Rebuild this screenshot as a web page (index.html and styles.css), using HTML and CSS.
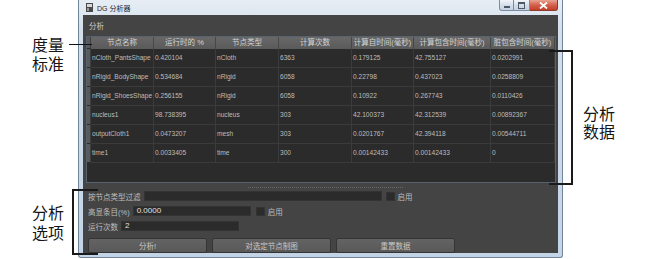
FILE: index.html
```html
<!DOCTYPE html>
<html lang="zh-CN">
<head>
    <meta charset="UTF-8">
    <title>DG 分析器</title>
    <link rel="stylesheet" href="styles.css">
</head>
<body>
<div class="page">

    <div class="side side-left">
        <div class="callout callout-metric">
            <div class="callout-line">度量</div>
            <div class="callout-line">标准</div>
        </div>
        <div class="callout callout-options">
            <div class="callout-line">分析</div>
            <div class="callout-line">选项</div>
        </div>
    </div>

    <div class="window">
        <div class="titlebar">
            <svg class="app-icon" width="7" height="9" viewBox="0 0 7 9">
                <rect x="0" y="0" width="7" height="9" fill="#4a4a4a"/>
                <rect x="1" y="1" width="5" height="3" fill="#d8d8d8"/>
                <rect x="1" y="5" width="2" height="3" fill="#9a9a9a"/>
            </svg>
            <span class="title">DG 分析器</span>
            <div class="caption-btns">
                <span class="cap-btn cap-min"><i></i></span>
                <span class="cap-btn cap-max"><i></i></span>
                <span class="cap-btn cap-close">
                    <svg width="9" height="7" viewBox="0 0 9 7">
                        <path d="M1 0.5 L8 6.5 M8 0.5 L1 6.5" stroke="#fff" stroke-width="1.8"/>
                    </svg>
                </span>
            </div>
        </div>

        <div class="client">
            <div class="menubar"><span>分析</span></div>

            <div class="grid">
                <div class="grid-row grid-head">
                    <div class="handle"></div>
                    <div class="th">节点名称</div>
                    <div class="th">运行时的 %</div>
                    <div class="th">节点类型</div>
                    <div class="th">计算次数</div>
                    <div class="th">计算自时间(毫秒)</div>
                    <div class="th">计算包含时间(毫秒)</div>
                    <div class="th">脏包含时间(毫秒)</div>
                </div>
                <div class="grid-row">
                    <div class="handle"></div>
                    <div class="td">nCloth_PantsShape</div>
                    <div class="td">0.420104</div>
                    <div class="td">nCloth</div>
                    <div class="td">6363</div>
                    <div class="td">0.179125</div>
                    <div class="td">42.755127</div>
                    <div class="td">0.0202991</div>
                </div>
                <div class="grid-row">
                    <div class="handle"></div>
                    <div class="td">nRigid_BodyShape</div>
                    <div class="td">0.534684</div>
                    <div class="td">nRigid</div>
                    <div class="td">6058</div>
                    <div class="td">0.22798</div>
                    <div class="td">0.437023</div>
                    <div class="td">0.0258809</div>
                </div>
                <div class="grid-row">
                    <div class="handle"></div>
                    <div class="td">nRigid_ShoesShape</div>
                    <div class="td">0.256155</div>
                    <div class="td">nRigid</div>
                    <div class="td">6058</div>
                    <div class="td">0.10922</div>
                    <div class="td">0.267743</div>
                    <div class="td">0.0110426</div>
                </div>
                <div class="grid-row">
                    <div class="handle"></div>
                    <div class="td">nucleus1</div>
                    <div class="td">98.738395</div>
                    <div class="td">nucleus</div>
                    <div class="td">303</div>
                    <div class="td">42.100373</div>
                    <div class="td">42.312539</div>
                    <div class="td">0.00892367</div>
                </div>
                <div class="grid-row">
                    <div class="handle"></div>
                    <div class="td">outputCloth1</div>
                    <div class="td">0.0473207</div>
                    <div class="td">mesh</div>
                    <div class="td">303</div>
                    <div class="td">0.0201767</div>
                    <div class="td">42.394118</div>
                    <div class="td">0.00544711</div>
                </div>
                <div class="grid-row">
                    <div class="handle"></div>
                    <div class="td">time1</div>
                    <div class="td">0.0033405</div>
                    <div class="td">time</div>
                    <div class="td">300</div>
                    <div class="td">0.00142433</div>
                    <div class="td">0.00142433</div>
                    <div class="td">0</div>
                </div>
            </div>

            <div class="splitter"><span class="grip"></span></div>

            <div class="options">
                <div class="opt-row">
                    <span class="opt-label">按节点类型过滤</span>
                    <span class="field field-wide"></span>
                    <span class="check"></span>
                    <span class="opt-label">启用</span>
                </div>
                <div class="opt-row">
                    <span class="opt-label">高显条目(%)</span>
                    <span class="field field-short">0.0000</span>
                    <span class="check check-2"></span>
                    <span class="opt-label">启用</span>
                </div>
                <div class="opt-row">
                    <span class="opt-label">运行次数</span>
                    <span class="field field-short">2</span>
                </div>
                <div class="buttons">
                    <button class="btn">分析!</button>
                    <button class="btn">对选定节点制图</button>
                    <button class="btn">重置数据</button>
                </div>
            </div>
        </div>
    </div>

    <div class="side side-right">
        <div class="callout callout-data">
            <div class="callout-line">分析</div>
            <div class="callout-line">数据</div>
        </div>
    </div>

    <span class="pointer pointer-metric"></span>
    <span class="bracket bracket-data"></span>
    <span class="bracket bracket-options"></span>
</div>
</body>
</html>
```

FILE: styles.css
```css
body {
    margin: 0;
    background: #fff;
    font-family: 'Liberation Sans', 'Noto Sans CJK SC', sans-serif;
}
.page {
    position: relative;
    display: flex;
    height: 259px;
    overflow: hidden;
}

/* callouts around the window */
.side {
    display: flex;
    flex-direction: column;
}
.side-left {
    width: 78px;
    padding-left: 32px;
    box-sizing: border-box;
}
.side-right {
    padding-left: 20px;
}
.callout {
    display: flex;
    flex-direction: column;
    gap: 2px;
    font-family: 'Noto Sans CJK SC', sans-serif;
    font-size: 16px;
    color: #161616;
    white-space: nowrap;
}
.callout-line {
    height: 17px;
    line-height: 17px;
}
.callout-metric {
    margin-top: 36px;
}
.callout-options {
    margin-top: 132px;
    gap: 3px;
}
.callout-data {
    margin-top: 105px;
    gap: 1px;
}
.pointer {
    position: absolute;
    left: 69px;
    top: 44px;
    width: 23px;
    height: 1px;
    background: #111;
}
.bracket {
    position: absolute;
    border: 2px solid #1a1a1a;
}
.bracket-data {
    left: 549px;
    top: 50px;
    width: 22px;
    height: 131px;
    border-left: none;
}
.bracket-options {
    left: 72px;
    top: 189px;
    width: 24px;
    height: 62px;
    border-right: none;
}

/* window frame */
.window {
    width: 485px;
    height: 258px;
    box-sizing: border-box;
    border: 1px solid #71849a;
    border-top: none;
    border-radius: 0 0 3px 3px;
    padding: 0 4px 4px 4px;
    background: linear-gradient(180deg, #e7edf4, #d4dfeb 30px, #c3d4e7);
    display: flex;
    flex-direction: column;
}
.titlebar {
    height: 15px;
    display: flex;
    align-items: center;
    padding-left: 3px;
}
.app-icon {
    margin-right: 4px;
}
.title {
    font-size: 7px;
    color: #1e1e1e;
}
.caption-btns {
    margin-left: auto;
    align-self: flex-start;
    display: flex;
    height: 11px;
}
.cap-btn {
    box-sizing: border-box;
    height: 11px;
    border: 1px solid #7b8ca2;
    border-top: none;
    display: flex;
    align-items: center;
    justify-content: center;
    background: linear-gradient(180deg, #f2f5f9, #d3dde9 55%, #c4d1e1);
}
.cap-min {
    width: 15px;
    border-radius: 0 0 0 3px;
}
.cap-min i {
    width: 6px;
    height: 2px;
    margin-top: 3px;
    background: #4c5866;
}
.cap-max {
    width: 16px;
    border-left: none;
}
.cap-max i {
    width: 5px;
    height: 4px;
    border: 1px solid #4c5866;
    border-top-width: 2px;
}
.cap-close {
    width: 28px;
    border-left: none;
    border-color: #8c3a2e;
    border-radius: 0 0 3px 0;
    background: linear-gradient(180deg, #e9a493, #d4604b 50%, #c2402c);
}

/* dark client area */
.client {
    flex: 1;
    background: #444;
    display: flex;
    flex-direction: column;
    font-size: 6.6px;
    color: #bdbdbd;
}
.menubar {
    height: 21px;
    padding-left: 6px;
    display: flex;
    align-items: center;
    font-size: 7.5px;
    color: #cfcfcf;
}
.grid {
    margin: 0 2px 0 3px;
    height: 147px;
    box-sizing: border-box;
    border: 1px solid #56636f;
    background: #2b2b2b;
}
.grid-row {
    display: grid;
    grid-template-columns: 4px 63px 62px 63px 73px 62px 77px 64px;
    height: 19px;
}
.grid-head {
    height: 12px;
}
.handle {
    background: #5a5a5a;
    border-bottom: 1px solid #2b2b2b;
    border-right: 1px solid #3e3e3e;
}
.th {
    background: linear-gradient(180deg, #686868, #5a5a5a);
    border-right: 1px solid #474747;
    color: #d4d4d4;
    font-size: 7.5px;
    line-height: 12px;
    text-align: center;
    white-space: nowrap;
    overflow: hidden;
}
.td {
    border-right: 1px solid #3b3b3b;
    border-bottom: 1px solid #3b3b3b;
    padding-left: 1px;
    line-height: 18px;
    white-space: nowrap;
    overflow: hidden;
}

.splitter {
    height: 8px;
    display: flex;
    align-items: center;
    justify-content: center;
}
.grip {
    width: 155px;
    height: 1px;
    margin-left: 10px;
    background: repeating-linear-gradient(90deg, #6a6a6a 0 1px, transparent 1px 2px);
}

.options {
    padding-left: 5px;
    display: flex;
    flex-direction: column;
    gap: 5px;
}
.opt-row {
    height: 10px;
    display: flex;
    align-items: center;
    gap: 3px;
}
.opt-label {
    font-size: 7.5px;
    color: #bdbdbd;
    white-space: nowrap;
}
.field {
    height: 10px;
    box-sizing: border-box;
    background: #2b2b2b;
    border: 1px solid #333;
    padding-left: 3px;
    font-size: 8px;
    line-height: 8px;
    color: #e2e2e2;
}
.field-wide {
    width: 238px;
}
.field-short {
    width: 118px;
}
.check {
    width: 7px;
    height: 7px;
    margin-left: 1px;
    background: #2b2b2b;
    border: 1px solid #333;
}
.check-2 {
    margin-left: 2px;
}
.buttons {
    display: flex;
    gap: 5px;
    margin-top: 2px;
}
.btn {
    width: 119px;
    height: 15px;
    padding: 0;
    background: linear-gradient(180deg, #636363, #595959);
    border: 1px solid #353535;
    border-radius: 2px;
    font-family: 'Liberation Sans', 'Noto Sans CJK SC', sans-serif;
    font-size: 7.5px;
    color: #c8c8c8;
}
```
